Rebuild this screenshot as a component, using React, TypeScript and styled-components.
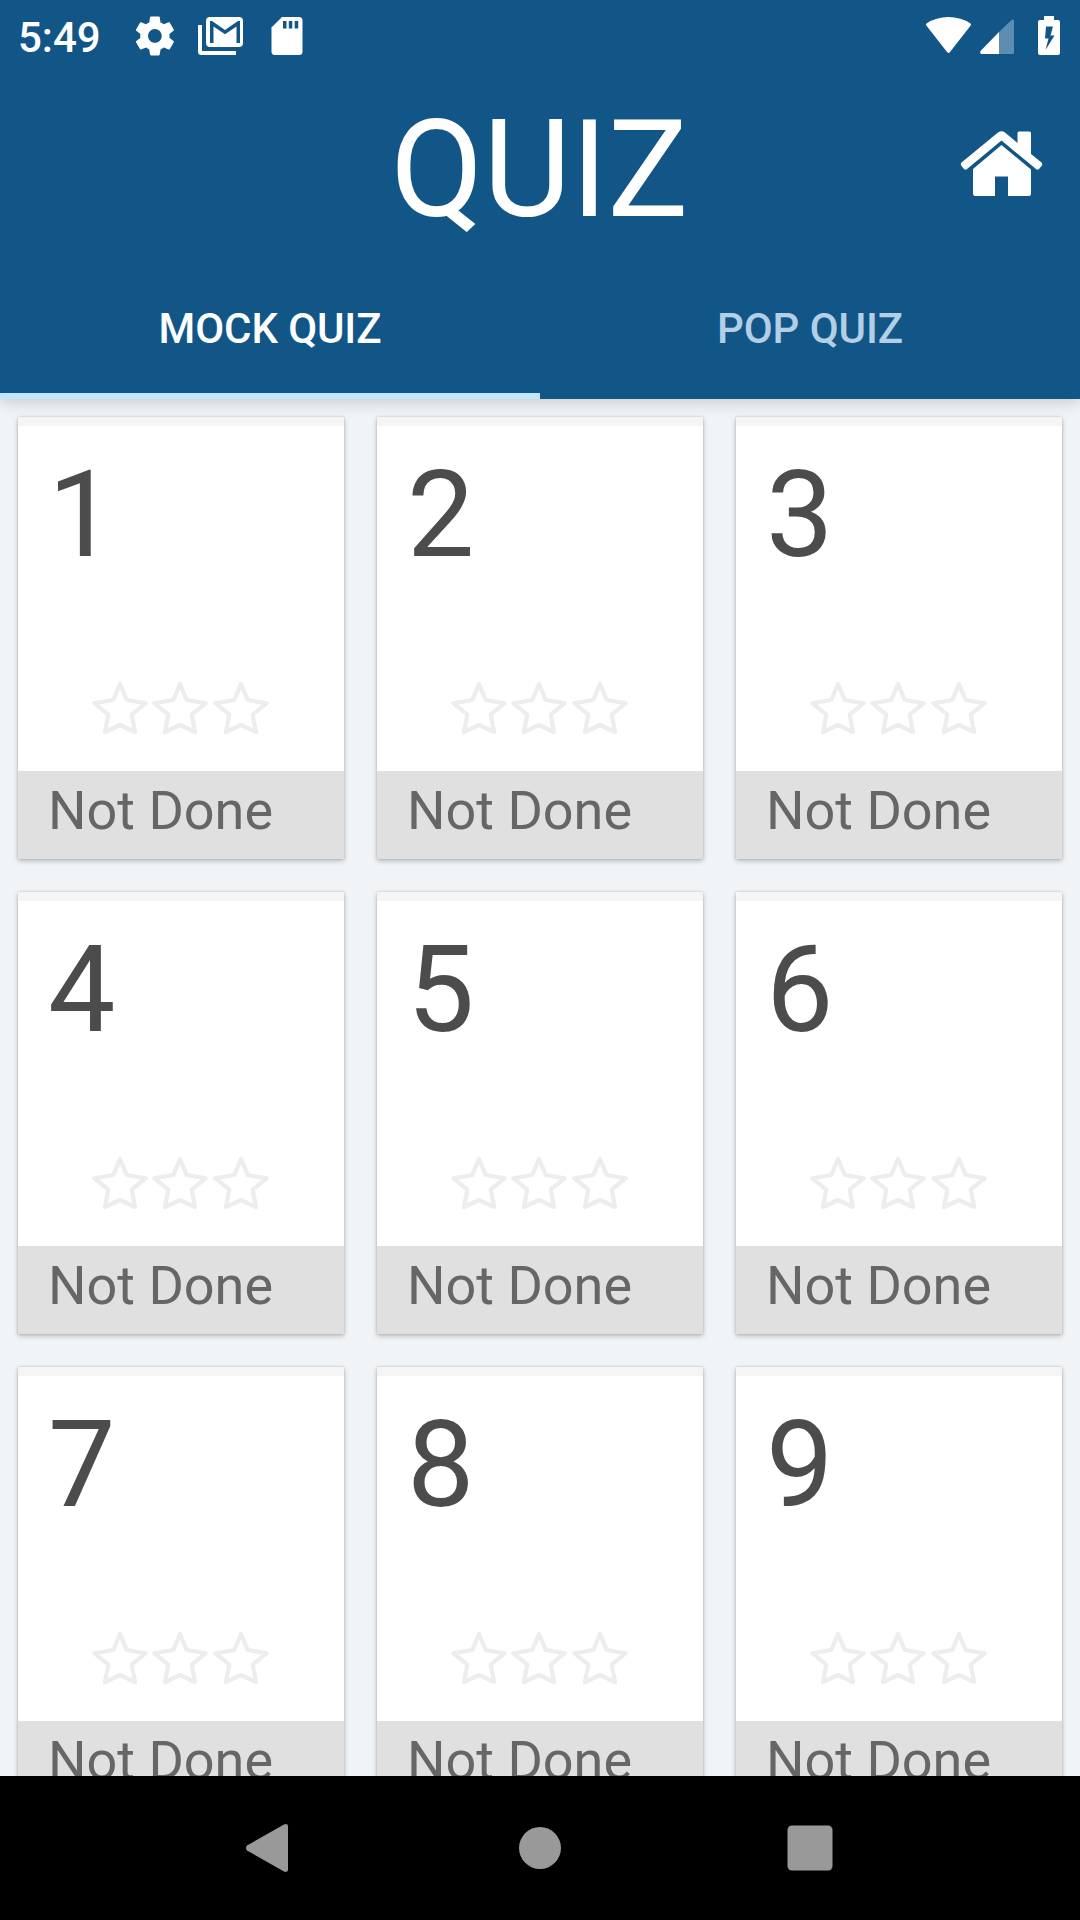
import React from "react";
import styled, { createGlobalStyle } from "styled-components";

const GlobalStyle = createGlobalStyle`
  * { box-sizing: border-box; }
  body { margin: 0; background: #f0f4f7; }
  svg { display: block; flex: none; }
`;

const Screen = styled.div`
  width: 1080px;
  height: 1920px;
  display: flex;
  flex-direction: column;
  overflow: hidden;
  background: #f0f4f7;
  font-family: Roboto, "Noto Sans", sans-serif;
`;

const Header = styled.header`
  flex: none;
  height: 399px;
  display: flex;
  flex-direction: column;
  background: #125688;
  color: #fff;
  box-shadow: 0 3px 15px rgba(0, 0, 0, 0.18);
  z-index: 1;
`;

const StatusBar = styled.div`
  height: 72px;
  display: flex;
  align-items: center;
  padding-left: 18px;
`;

const Clock = styled.span`
  width: 111px;
  font-size: 42px;
  font-weight: 500;
  line-height: 72px;
  padding-top: 4px;
`;

const NoticeIcons = styled.div`
  flex: 1;
  display: flex;
`;

const SystemIcons = styled.div`
  display: flex;
`;

const TitleBar = styled.div`
  height: 168px;
  display: grid;
  grid-template-columns: 160px 1fr 160px;
  align-items: start;
`;

const Title = styled.h1`
  grid-column: 2;
  margin: 0;
  padding: 19px 1px 0 0;
  text-align: center;
  font-size: 135px;
  font-weight: 400;
  line-height: 158px;
`;

const HomeButton = styled.div`
  padding-left: 40px;
  padding-top: 58px;
`;

const Tabs = styled.nav`
  flex: 1;
  display: grid;
  grid-template-columns: 1fr 1fr;
`;

const Tab = styled.div<{ $active?: boolean }>`
  display: flex;
  justify-content: center;
  padding-top: 64px;
  font-size: 42px;
  font-weight: 500;
  line-height: 50px;
  letter-spacing: -0.1px;
  color: ${(p) => (p.$active ? "#fff" : "#b2cfe5")};
  border-bottom: 6px solid ${(p) => (p.$active ? "#c1e7ff" : "transparent")};
`;

const Content = styled.main`
  flex: 1;
  min-height: 0;
  overflow: hidden;
  padding: 18px 18px 0;
`;

const Grid = styled.div`
  display: grid;
  grid-template-columns: repeat(3, 326px);
  gap: 33px;
`;

const Card = styled.article`
  height: 442px;
  display: flex;
  flex-direction: column;
  background: #fff;
  border-top: 9px solid #f5f5f5;
  box-shadow: 0 2px 5px rgba(0, 0, 0, 0.24), 0 0 2px rgba(0, 0, 0, 0.16);
`;

const Num = styled.div`
  padding: 19px 0 0 30px;
  height: 251px;
  font-size: 120px;
  line-height: 141px;
  color: #4c4c4c;
`;

const Stars = styled.div`
  flex: 1;
  display: flex;
  justify-content: center;
  gap: 0.5px;
  padding-right: 2px;
`;

const Status = styled.div`
  height: 88px;
  padding: 8px 0 0 30px;
  font-size: 54px;
  line-height: 63px;
  color: #666;
  background: #e0e0e0;
`;

const NavBar = styled.footer`
  flex: none;
  height: 144px;
  display: grid;
  grid-template-columns: repeat(3, 270px);
  justify-content: center;
  align-items: center;
  justify-items: center;
  background: #000;
`;

const Star = () => (
  <svg width="60" height="60" viewBox="90 677 60 60">
    <path
      d="M120 684 L126.700 700 L145.700 703.200 L131.700 714.700 L135 732 L120 725 L105 732 L108.300 714.700 L94.300 703.200 L113.300 700 Z"
      fill="none"
      stroke="#ededed"
      strokeWidth="4.2"
      strokeLinejoin="round"
    />
  </svg>
);

const NoticeGlyphs = () => (
  <svg width="190" height="72" viewBox="129 0 190 72" fill="#fff">
    <path
      transform="translate(131.500 12.500) scale(1.95)"
      d="M19.43 12.98c.04-.32.07-.64.07-.98s-.03-.66-.07-.98l2.110-1.650c.19-.15.24-.42.12-.64l-2-3.460c-.12-.22-.39-.3-.61-.22l-2.490 1c-.52-.4-1.080-.73-1.690-.98l-.38-2.650C14.460 2.180 14.250 2 14 2h-4c-.25 0-.46.18-.49.42l-.38 2.650c-.61.25-1.170.59-1.690.98l-2.490-1c-.23-.09-.49 0-.61.22l-2 3.460c-.13.22-.07.49.12.64l2.110 1.650c-.04.32-.07.65-.07.98s.03.66.07.98l-2.110 1.650c-.19.15-.24.42-.12.64l2 3.460c.12.22.39.3.61.22l2.490-1c.52.4 1.080.73 1.690.98l.38 2.650c.03.24.24.42.49.42h4c.25 0 .46-.18.49-.42l.38-2.650c.61-.25 1.170-.59 1.690-.98l2.490 1c.23.09.49 0 .61-.22l2-3.460c.12-.22.07-.49-.12-.64l-2.110-1.650zM12 15.500c-1.930 0-3.500-1.570-3.500-3.500s1.570-3.500 3.500-3.500 3.500 1.570 3.500 3.500-1.570 3.500-3.500 3.500z"
    />
    <path d="M198 25v26.500q0 3.500 3.500 3.500H236v-4H202V25z" />
    <path
      fillRule="evenodd"
      d="M210 17H239q4 0 4 4V43q0 4-4 4H210q-4 0-4-4V21q0-4 4-4zM210 21V43H213.500V26.500L225 34.300 236.500 26.500V43H240V21H238L225 30 212 21z"
    />
    <path d="M282 17H299q3.500 0 3.500 3.500V51.500q0 3.500-3.500 3.500H275q-3.500 0-3.500-3.500V27.500z" />
    <path fill="#125688" d="M283 21h3.500v7.500H283zM288.800 21h3.500v7.500h-3.500zM294.700 21h3.500v7.500h-3.500z" />
  </svg>
);

const SystemGlyphs = () => (
  <svg width="160" height="72" viewBox="920 0 160 72" fill="#fff">
    <path d="M926.500 23.500Q936 17 948.500 17T970.500 23.500Q971.500 24.500 970.500 25.800L950 52Q948.500 54 947 52L926.500 25.800Q925.500 24.500 926.500 23.500z" />
    <path fill="#5f8db0" d="M999 32L1011.500 20Q1014 18.500 1014 21.500V52.500Q1014 54 1012.500 54H999z" />
    <path d="M999 32V54H981Q979.500 53 980.500 51z" />
    <path
      fillRule="evenodd"
      d="M1044 16H1054V20H1058Q1060 20 1060 22V53Q1060 55 1058 55H1040Q1038 55 1038 53V22Q1038 20 1040 20H1044zM1046 26.500L1045 38.500H1048.500L1045.500 50 1054.500 35.500H1050.500L1053 26.500z"
    />
  </svg>
);

const HomeIcon = () => (
  <svg width="84" height="68" viewBox="960 130 84 68" fill="#fff">
    <path d="M998 132.500Q1001.500 129.800 1005 132.500L1017.500 143V133Q1017.500 131.500 1019 131.500H1029.500Q1031 131.500 1031 133V154L1041.500 162.500Q1043 164 1041.500 166L1039 169Q1037.500 170.300 1036 169L1001.500 140.500 967 169Q965.500 170.300 964 169L961.500 166Q960 164 961.500 162.500z" />
    <path d="M1001.500 145L1031 169.500V193.500Q1031 196 1028.500 196H1008V176.500H995V196H975.500Q973 196 973 193.500V169z" />
  </svg>
);

const quizzes = [1, 2, 3, 4, 5, 6, 7, 8, 9];

export default function App() {
  return (
    <Screen>
      <GlobalStyle />
      <Header>
        <StatusBar>
          <Clock>5:49</Clock>
          <NoticeIcons>
            <NoticeGlyphs />
          </NoticeIcons>
          <SystemIcons>
            <SystemGlyphs />
          </SystemIcons>
        </StatusBar>
        <TitleBar>
          <Title>QUIZ</Title>
          <HomeButton>
            <HomeIcon />
          </HomeButton>
        </TitleBar>
        <Tabs>
          <Tab $active>MOCK QUIZ</Tab>
          <Tab>POP QUIZ</Tab>
        </Tabs>
      </Header>
      <Content>
        <Grid>
          {quizzes.map((n) => (
            <Card key={n}>
              <Num>{n}</Num>
              <Stars>
                <Star />
                <Star />
                <Star />
              </Stars>
              <Status>Not Done</Status>
            </Card>
          ))}
        </Grid>
      </Content>
      <NavBar>
        <svg width="50" height="50" viewBox="245 1823 50 50">
          <path fill="#999" d="M247 1845.500L284 1824.500Q288 1823 288 1826.500V1869.500Q288 1873 284 1871.500L247 1850.500Q245 1848 247 1845.500z" />
        </svg>
        <svg width="42" height="42" viewBox="0 0 42 42">
          <circle cx="21" cy="21" r="21" fill="#999" />
        </svg>
        <svg width="46" height="46" viewBox="0 0 46 46">
          <rect x="0.500" y="0.500" width="45" height="45" rx="4.500" fill="#999" />
        </svg>
      </NavBar>
    </Screen>
  );
}
